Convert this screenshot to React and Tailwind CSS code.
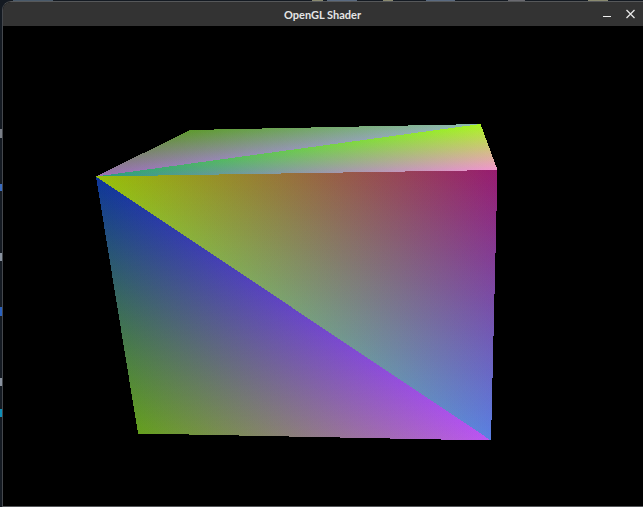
const A = [96, 176.5]
const B = [497.5, 170]
const C = [491, 440.5]
const D = [138, 433.5]
const E = [190, 130]
const F = [480.5, 124]

// each face corner has its own colour, like the vertex attributes in the shader
const TRIANGLES = [
  { id: 'top-left', pts: [A, E, F], colors: ['#9a6fb4', '#5e9a2e', '#8fbcb2'] },
  { id: 'top-right', pts: [A, F, B], colors: ['#2a9c80', '#a8f620', '#f296ce'] },
  { id: 'front-top', pts: [A, B, C], colors: ['#98c008', '#971c70', '#5a80e2'] },
  { id: 'front-bottom', pts: [A, C, D], colors: ['#0e3699', '#bd55f2', '#659f1e'] },
]

// foot of the altitude from v onto the edge p-q
function foot(v, p, q) {
  const dx = q[0] - p[0]
  const dy = q[1] - p[1]
  const t = ((v[0] - p[0]) * dx + (v[1] - p[1]) * dy) / (dx * dx + dy * dy)
  return [p[0] + t * dx, p[1] + t * dy]
}

function Triangle({ id, pts, colors }) {
  const points = pts.map(p => p.join(',')).join(' ')
  return (
    <g className="isolate">
      <defs>
        {pts.map((v, i) => {
          const end = foot(v, pts[(i + 1) % 3], pts[(i + 2) % 3])
          return (
            <linearGradient key={i} id={`${id}-${i}`} gradientUnits="userSpaceOnUse" x1={v[0]} y1={v[1]} x2={end[0]} y2={end[1]}>
              <stop offset="0" stopColor={colors[i]} />
              <stop offset="1" stopColor="#000" />
            </linearGradient>
          )
        })}
      </defs>
      <polygon points={points} fill="#000" shapeRendering="crispEdges" />
      {pts.map((_, i) => (
        <polygon key={i} points={points} fill={`url(#${id}-${i})`} shapeRendering="crispEdges" className="mix-blend-plus-lighter" />
      ))}
    </g>
  )
}

function Cube() {
  return (
    <svg width="640" height="480" viewBox="3 26 640 480" className="block">
      {TRIANGLES.map(t => <Triangle key={t.id} {...t} />)}
    </svg>
  )
}

function TopStrip() {
  return (
    <div className="flex h-[1px] shrink-0">
      <span className="ml-[13px] w-[40px] bg-[#4a5a6a]" />
      <span className="ml-[259px] w-[11px] bg-[#8a8a70]" />
      <span className="ml-[4px] w-[30px] bg-[#5a6a80]" />
      <span className="ml-[26px] w-[10px] bg-[#8a8a70]" />
      <span className="ml-[33px] w-[29px] bg-[#5a6a80]" />
      <span className="ml-[53px] w-[17px] bg-[#6a6a70]" />
      <span className="ml-[63px] w-[20px] bg-[#8a8a70]" />
    </div>
  )
}

function LeftStrip() {
  return (
    <div className="flex w-[2px] shrink-0 flex-col">
      <span className="mt-[128px] h-[9px] bg-[#7a7f88]" />
      <span className="mt-[46px] h-[7px] bg-[#3a6cc0]" />
      <span className="mt-[62px] h-[8px] bg-[#8a93a0]" />
      <span className="mt-[46px] h-[9px] bg-[#2a62c0]" />
      <span className="mt-[62px] h-[8px] bg-[#8a93a0]" />
      <span className="mt-[23px] h-[8px] bg-[#0e8fb8]" />
    </div>
  )
}

export default function App() {
  return (
    <div className="flex h-[507px] w-[643px] flex-col overflow-hidden bg-[#141a22]">
      <TopStrip />
      <div className="flex min-h-0 flex-1">
        <LeftStrip />
        <div className="flex min-w-0 flex-1 flex-col overflow-hidden rounded-tl-[9px] border-t border-l border-b border-t-[#56585a] border-l-[#44474c] border-b-[#55575a] bg-black">
          {/* Title bar */}
          <div className="grid h-[24px] shrink-0 grid-cols-[1fr_auto_1fr] items-center bg-[#333333]">
            <span />
            <span className="mr-[1px] font-['Lato',sans-serif] text-[11px] leading-none font-bold text-[#e6e6e6]">OpenGL Shader</span>
            <div className="flex items-center justify-end gap-[13px] pr-[7px]">
              <svg width="10" height="10" viewBox="0 0 10 10" className="block">
                <rect x="0" y="7" width="8" height="1" fill="#f0f0f0" />
              </svg>
              <svg width="10" height="10" viewBox="0 0 10 10" className="block">
                <path d="M0.5 1 L8.5 9 M8.5 1 L0.5 9" stroke="#e8e8e8" strokeWidth="1.3" fill="none" />
              </svg>
            </div>
          </div>
          <div className="min-h-0 flex-1">
            <Cube />
          </div>
        </div>
      </div>
    </div>
  )
}
